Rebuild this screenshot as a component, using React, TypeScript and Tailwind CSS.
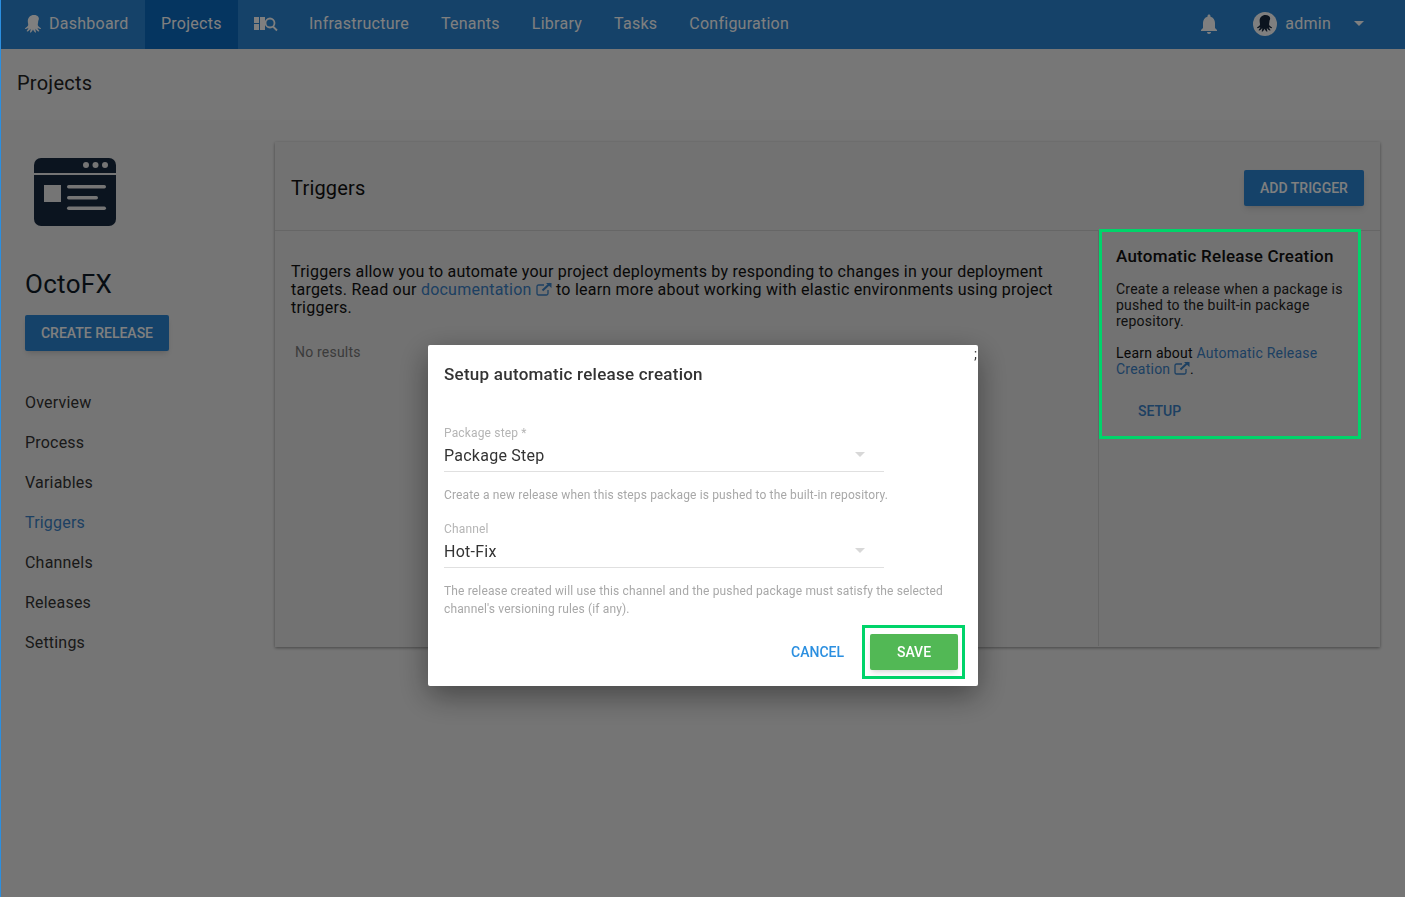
import { Fragment } from "react";
import { MdNotifications } from "react-icons/md";

const font = { fontFamily: "Roboto, sans-serif" };

function Octopus({ className }: { className?: string }) {
  return (
    <svg viewBox="0 0 20 20" className={className} fill="currentColor">
      <path d="M10 1C6.200 1 3.800 3.700 3.800 7c0 1.700.5 2.800.4 4-.1 1.100-1.300 2-2.800 2.900-.6.4-.3 1.200.4 1.100 1.100-.1 2-.6 2.700-1.200-.2 1.200-.9 2-1.600 2.700-.4.500.1 1.200.7.900 1.400-.5 2.300-1.600 2.900-2.700.1 1.100 0 2.200-.5 3.200-.2.500.4.900.9.600 1-.8 1.700-2 2.100-3 .4 1 1.100 2.200 2.100 3 .5.300 1.100-.1.900-.6-.5-1-.6-2.100-.5-3.200.6 1.100 1.500 2.200 2.900 2.700.6.300 1.100-.4.700-.9-.7-.7-1.400-1.500-1.600-2.700.7.600 1.600 1.100 2.700 1.200.7.100 1-.7.4-1.100-1.500-.9-2.700-1.800-2.800-2.900-.1-1.200.4-2.300.4-4C16.200 3.700 13.800 1 10 1z" />
    </svg>
  );
}

function LibraryIcon() {
  return (
    <svg viewBox="0 0 24 16" className="h-[16px] w-[24px]" fill="currentColor">
      <rect x="0" y="1" width="5" height="6" />
      <rect x="0" y="8" width="5" height="6" />
      <rect x="6" y="1" width="5" height="13" />
      <circle cx="16" cy="7" r="4.500" fill="#2a88d6" stroke="currentColor" strokeWidth="1.800" />
      <path d="M19 10.500l4 4" stroke="currentColor" strokeWidth="1.800" />
    </svg>
  );
}

function ExternalIcon() {
  return (
    <svg viewBox="0 0 16 14" className="inline-block h-[14px] w-[16px] align-[-1px]" fill="none" stroke="currentColor">
      <path d="M12 8v3.500a1.500 1.500 0 0 1-1.500 1.500h-8A1.500 1.500 0 0 1 1 11.500v-7A1.500 1.500 0 0 1 2.500 3H8" strokeWidth="1.300" />
      <path d="M6.500 8.500L14 1.500" strokeWidth="2" />
      <path d="M10 1h5.500v5z" fill="currentColor" stroke="none" />
    </svg>
  );
}

function ProjectLogo() {
  return (
    <svg viewBox="0 0 82 68" className="h-[68px] w-[82px]">
      <path d="M7 0h68a7 7 0 0 1 7 7v8H0V7a7 7 0 0 1 7-7z" fill="#17293f" />
      <path d="M0 17h82v44a7 7 0 0 1-7 7H7a7 7 0 0 1-7-7z" fill="#17293f" />
      <circle cx="52" cy="7" r="3" fill="#eaeaea" />
      <circle cx="61.500" cy="7" r="3" fill="#eaeaea" />
      <circle cx="71" cy="7" r="3" fill="#eaeaea" />
      <rect x="10" y="27" width="17" height="17" fill="#eaeaea" />
      <rect x="33" y="27" width="39" height="3.500" rx="1.700" fill="#eaeaea" />
      <rect x="33" y="38" width="31" height="3.500" rx="1.700" fill="#eaeaea" />
      <rect x="33" y="48.500" width="39" height="3.500" rx="1.700" fill="#eaeaea" />
    </svg>
  );
}

const navItems = ["Infrastructure", "Tenants", "Library", "Tasks", "Configuration"];
const sideItems = ["Overview", "Process", "Variables", "Triggers", "Channels", "Releases", "Settings"];

function TopBar() {
  return (
    <div className="flex h-[49px] items-stretch bg-[#2a85d2] pb-[2px] text-[16px] tracking-[0.25px] text-white">
      <div className="flex w-[144px] items-center gap-[5px] pl-[23px]">
        <Octopus className="h-[20px] w-[20px]" />
        <span>Dashboard</span>
      </div>
      <div className="mb-[-2px] flex w-[93px] items-center bg-[#0a6ac0] pb-[2px] pl-[16px]">Projects</div>
      <div className="flex w-[55px] items-center justify-center">
        <LibraryIcon />
      </div>
      {navItems.map((item) => (
        <div key={item} className="flex items-center px-[16px]">
          {item}
        </div>
      ))}
      <div className="ml-auto flex items-center">
        <MdNotifications className="mr-[32px] h-[24px] w-[24px]" />
        <div className="mr-[8px] flex h-[24px] w-[24px] items-center justify-center rounded-full bg-white text-[#17293f]">
          <Octopus className="h-[19px] w-[19px]" />
        </div>
        <span>admin</span>
        <div className="ml-[23px] mr-[41px] h-0 w-0 border-x-[5px] border-t-[5px] border-x-transparent border-t-white" />
      </div>
    </div>
  );
}

function Sidebar() {
  return (
    <div className="w-[274px] shrink-0 pl-[24px] pt-[38px]">
      <div className="pl-[9px]">
        <ProjectLogo />
      </div>
      <h2 className="mt-[42px] text-[26px] leading-[32px] tracking-[0.3px] text-[#0f1a26]">OctoFX</h2>
      <button className="mt-[15px] block h-[36px] w-[144px] rounded-[2px] bg-[#2a85d2] text-[14px] font-medium text-white shadow-md">
        CREATE RELEASE
      </button>
      <div className="mt-[32px] flex flex-col">
        {sideItems.map((item) => (
          <div
            key={item}
            className={`flex h-[40px] items-center text-[16px] tracking-[0.2px] ${item === "Triggers" ? "text-[#3a80c4]" : "text-[#333333]"}`}
          >
            {item}
          </div>
        ))}
      </div>
    </div>
  );
}

function TriggersCard() {
  return (
    <div className="h-[505px] w-[1105px] bg-[#e4e4e4] shadow-[0_1px_3px_rgba(0,0,0,0.4)]">
      <div className="flex h-[89px] items-center justify-between border-b border-[#cccccc] pl-[16px] pr-[16px] pt-[4px]">
        <h3 className="text-[20px] tracking-[0.2px] text-[#111111]">Triggers</h3>
        <button className="h-[36px] w-[120px] rounded-[2px] bg-[#2a85d2] text-[14px] font-medium text-white shadow-md">
          ADD TRIGGER
        </button>
      </div>
      <div className="flex h-[415px]">
        <div className="w-[824px] border-r border-[#cccccc] pl-[16px] pr-[32px] pt-[32px]">
          <p className="text-[16px] leading-[18px] tracking-[0.23px] text-[#111111]">
            Triggers allow you to automate your project deployments by responding to changes in your deployment targets. Read our{" "}
            <span className="text-[#3a80c4]">
              documentation <ExternalIcon />
            </span>{" "}
            to learn more about working with elastic environments using project triggers.
          </p>
          <p className="mt-[26px] pl-[4px] text-[14px] leading-[18px] tracking-[0.2px] text-[#777777]">No results</p>
        </div>
        <div className="relative mt-[-2px] h-[210px] w-[262px] pl-[17px] pt-[17px]">
          <div className="absolute inset-0 z-10 border-[3px] border-[#00d46a]" />
          <h4 className="text-[17px] font-medium leading-[20px] tracking-[0.23px] text-[#111111]">Automatic Release Creation</h4>
          <p className="mt-[15px] w-[235px] text-[14px] leading-[16px] tracking-[0.23px] text-[#222222]">
            Create a release when a package is pushed to the built-in package repository.
          </p>
          <p className="mt-[16px] w-[235px] text-[14px] leading-[16px] tracking-[0.23px] text-[#111111]">
            Learn about{" "}
            <span className="text-[#3a80c4]">
              Automatic Release Creation <ExternalIcon />
            </span>
            .
          </p>
          <div className="mt-[26px] pl-[22px] text-[14px] font-medium leading-[16px] text-[#3a80c4]">SETUP</div>
        </div>
      </div>
    </div>
  );
}

function Field({ label, value, help }: { label: string; value: string; help: string[] }) {
  return (
    <Fragment>
      <div className="text-[12px] leading-[14px] tracking-[0.16px] text-[#b5b5b5]">{label}</div>
      <div className="flex h-[32px] w-[440px] items-center justify-between border-b border-[#e0e0e0] pr-[19px] text-[16px] tracking-[0.25px] text-[#333333]">
        <span>{value}</span>
        <div className="mb-[3px] h-0 w-0 border-x-[5px] border-t-[5px] border-x-transparent border-t-[#d8d8d8]" />
      </div>
      <div className="mt-[14px] text-[12px] leading-[18px] tracking-[0.15px] text-[#a8a8a8]">
        {help.map((line) => (
          <div key={line}>{line}</div>
        ))}
      </div>
    </Fragment>
  );
}

function SetupDialog() {
  return (
    <div className="fixed left-[428px] top-[345px] flex h-[341px] w-[550px] flex-col rounded-[2px] bg-white pl-[16px] shadow-[0_10px_30px_rgba(0,0,0,0.4)]">
      <span className="absolute right-[1px] top-0 text-[14px] leading-[18px] text-[#333333]">;</span>
      <h3 className="mt-[19px] text-[17px] font-medium leading-[20px] tracking-[0.25px] text-[#333333]">Setup automatic release creation</h3>
      <div className="mt-[42px]">
        <Field
          label="Package step *"
          value="Package Step"
          help={["Create a new release when this steps package is pushed to the built-in repository."]}
        />
      </div>
      <div className="mt-[18px]">
        <Field
          label="Channel"
          value="Hot-Fix"
          help={[
            "The release created will use this channel and the pushed package must satisfy the selected",
            "channel's versioning rules (if any).",
          ]}
        />
      </div>
      <div className="absolute bottom-[7px] right-[13px] flex items-center">
        <span className="mr-[18px] text-[14px] font-medium text-[#2b8fe0]">CANCEL</span>
        <div className="border-[3px] border-[#00d46a] py-[6px] pl-[5px] pr-[4px]">
          <button className="block h-[36px] w-[88px] rounded-[2px] bg-[#52b855] text-[14px] font-medium text-white shadow-md">
            SAVE
          </button>
        </div>
      </div>
    </div>
  );
}

export default function App() {
  return (
    <div className="min-h-screen border-l border-[#2b8fe0] bg-[#ebebeb]" style={font}>
      <TopBar />
      <div className="flex h-[71px] items-center bg-[#eeeeee] pb-[4px] pl-[16px]">
        <h1 className="text-[20px] tracking-[0.25px] text-[#222222]">Projects</h1>
      </div>
      <div className="flex">
        <Sidebar />
        <div className="pt-[22px]">
          <TriggersCard />
        </div>
      </div>
      <div className="fixed inset-y-0 left-[1px] right-0 bg-black/50" />
      <SetupDialog />
    </div>
  );
}
